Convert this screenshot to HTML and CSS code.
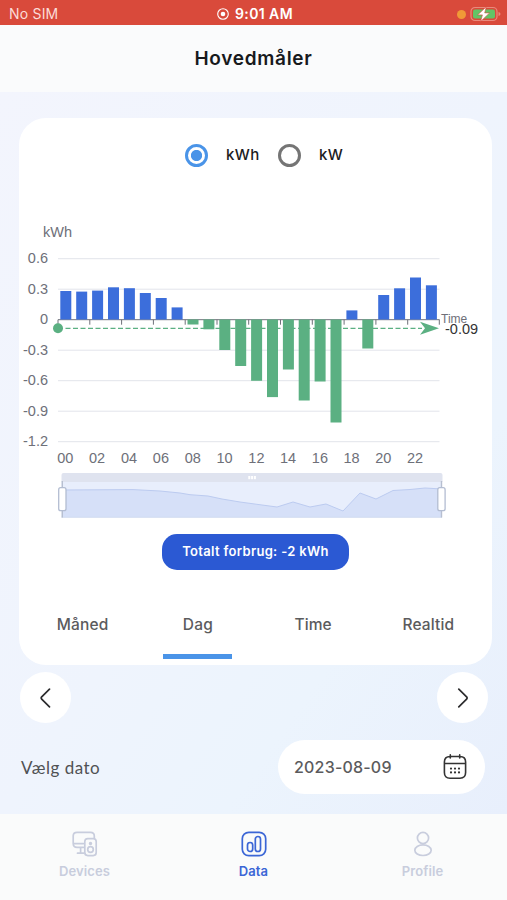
FILE: index.html
```html
<!DOCTYPE html>
<html lang="da">
<head>
    <meta charset="UTF-8">
    <meta name="viewport" content="width=device-width, initial-scale=1.0">
    <title>Hovedmåler</title>
    <link rel="stylesheet" href="styles.css">
</head>
<body>
    <div class="status">
        <span class="sim">No SIM</span>
        <div class="clock">
            <svg width="12" height="12" viewBox="0 0 12 12"><circle cx="6" cy="6" r="5.3" fill="none" stroke="#fff" stroke-width="1.1"/><circle cx="6" cy="6" r="2.3" fill="#fff"/></svg>
            <span>9:01 AM</span>
        </div>
        <div class="battery">
            <span class="dot"></span>
            <svg width="31" height="16" viewBox="0 0 31 16">
                <rect x="1" y="1.5" width="26" height="13" rx="4" fill="none" stroke="#e98a7d" stroke-width="1.2"/>
                <rect x="3" y="3.5" width="22" height="9" rx="2" fill="#62c466"/>
                <path d="M28.5 6v4q2-.6 2-2t-2-2z" fill="#e98a7d"/>
                <path d="M16.3.8 7.6 8.9h4.8L10.600 15.500l9-8.600h-4.900z" fill="#fff" stroke="#d9483a" stroke-width=".6"/>
            </svg>
        </div>
    </div>

    <header class="header">
        <h1>Hovedmåler</h1>
    </header>

    <main class="content">
        <section class="card">
            <div class="units">
                <span class="radio checked"></span>
                <label>kWh</label>
                <span class="radio"></span>
                <label>kW</label>
            </div>

            <svg class="chart" width="473" height="315" viewBox="19 210 473 315">
                <!-- grid -->
                <path d="M58 258.7h381.5M58 289.2h381.5M58 350.2h381.5M58 380.7h381.5M58 411.2h381.5M58 441.7h381.5" stroke="#e2e4eb"/>
                <!-- x axis -->
                <path d="M58 319.7h381.5M58 319.7v5M89.8 319.7v5M121.6 319.7v5M153.4 319.7v5M185.2 319.7v5M217 319.7v5M248.7 319.7v5M280.5 319.7v5M312.3 319.7v5M344.1 319.7v5M375.9 319.7v5M407.7 319.7v5M439.3 319.7v5" stroke="#6e7079" fill="none"/>
                <!-- usage -->
                <g fill="#3c6edb">
                    <rect x="60.3" y="291" width="11" height="28.5"/>
                    <rect x="76.2" y="291.6" width="11" height="27.9"/>
                    <rect x="92.1" y="290.6" width="11" height="28.9"/>
                    <rect x="108" y="287.3" width="11" height="32.2"/>
                    <rect x="123.9" y="288.2" width="11" height="31.3"/>
                    <rect x="139.8" y="293" width="11" height="26.5"/>
                    <rect x="155.7" y="298" width="11" height="21.5"/>
                    <rect x="171.6" y="307.4" width="11" height="12.1"/>
                    <rect x="346.4" y="310.4" width="11" height="9.1"/>
                    <rect x="378.2" y="295" width="11" height="24.5"/>
                    <rect x="394.1" y="288.3" width="11" height="31.2"/>
                    <rect x="410" y="277.5" width="11" height="42"/>
                    <rect x="425.9" y="285.3" width="11" height="34.2"/>
                </g>
                <!-- production -->
                <g fill="#5bb082">
                    <rect x="187.5" y="319.5" width="11" height="5"/>
                    <rect x="203.4" y="319.5" width="11" height="9.8"/>
                    <rect x="219.3" y="319.5" width="11" height="30.5"/>
                    <rect x="235.2" y="319.5" width="11" height="46.5"/>
                    <rect x="251.1" y="319.5" width="11" height="61.3"/>
                    <rect x="267" y="319.5" width="11" height="77.6"/>
                    <rect x="282.9" y="319.5" width="11" height="50"/>
                    <rect x="298.7" y="319.5" width="11" height="81"/>
                    <rect x="314.6" y="319.5" width="11" height="62"/>
                    <rect x="330.5" y="319.5" width="11" height="103"/>
                    <rect x="362.3" y="319.5" width="11" height="29"/>
                </g>
                <!-- average line -->
                <path d="M58 328.3h364" stroke="#5bb082" stroke-width="1.2" stroke-dasharray="5 2.5"/>
                <circle cx="58" cy="328.3" r="5" fill="#5bb082"/>
                <path d="M439 328.3 420 321.8l5 6.5-5 6.5z" fill="#5bb082"/>

                <g class="axis-text">
                    <text x="57.5" y="237" text-anchor="middle">kWh</text>
                    <g text-anchor="end">
                        <text x="48" y="263">0.6</text>
                        <text x="48" y="293.5">0.3</text>
                        <text x="48" y="324">0</text>
                        <text x="48" y="354.5">-0.3</text>
                        <text x="48" y="385">-0.6</text>
                        <text x="48" y="415.500">-0.9</text>
                        <text x="48" y="446">-1.2</text>
                    </g>
                    <g text-anchor="middle">
                        <text x="65.3" y="463.2">00</text>
                        <text x="97.1" y="463.2">02</text>
                        <text x="129" y="463.2">04</text>
                        <text x="160.9" y="463.2">06</text>
                        <text x="192.7" y="463.2">08</text>
                        <text x="224.6" y="463.2">10</text>
                        <text x="256.4" y="463.2">12</text>
                        <text x="288" y="463.2">14</text>
                        <text x="319.9" y="463.2">16</text>
                        <text x="351.6" y="463.2">18</text>
                        <text x="383.2" y="463.2">20</text>
                        <text x="415" y="463.2">22</text>
                    </g>
                    <text class="axis-name" x="441" y="322.6">Time</text>
                    <text class="average" x="445" y="333.6">-0.09</text>
                </g>

                <!-- zoom slider -->
                <rect x="61.5" y="482" width="380.5" height="35.5" fill="#e8eefc"/>
                <path d="M62 490 133 489.6 160 491 180 493 190 494.7 208 496 222 499 240 502 262 505 277 507 293 502 310 507 326 504 343 511 360 493 376 499 393 490.5 410 489.5 425 488 442 489V517.5H62z" fill="#d6e0f8"/>
                <path d="M62 490 133 489.6 160 491 180 493 190 494.7 208 496 222 499 240 502 262 505 277 507 293 502 310 507 326 504 343 511 360 493 376 499 393 490.5 410 489.5 425 488 442 489" fill="none" stroke="#bccbf0"/>
                <path d="M61.5 517.3H442" stroke="#d2dbee" stroke-width=".7"/>
                <path d="M61.5 482v-7q0-2 2-2H440.5q2 0 2 2v7z" fill="#dfe3ef"/>
                <g fill="#fff">
                    <rect x="248.3" y="476" width="2" height="3.2"/>
                    <rect x="251.1" y="476" width="2" height="3.2"/>
                    <rect x="253.9" y="476" width="2" height="3.2"/>
                </g>
                <path d="M62.3 481v36.5M441.5 481v36.5" stroke="#b7bfd0" stroke-width="1.4"/>
                <g fill="#fff" stroke="#b3bdd2" stroke-width="1.3">
                    <rect x="58.7" y="487.7" width="7.3" height="23" rx="2"/>
                    <rect x="437.8" y="487.7" width="7.3" height="23" rx="2"/>
                </g>
            </svg>

            <div class="total">Totalt forbrug: -2 kWh</div>

            <nav class="tabs">
                <span class="tab">Måned</span>
                <span class="tab active">Dag</span>
                <span class="tab">Time</span>
                <span class="tab">Realtid</span>
            </nav>
        </section>

        <div class="pager">
            <button class="round">
                <svg width="12" height="20" viewBox="0 0 12 20"><path d="M9.500 1.200 1.700 8.800q-1 1.200 0 2.400l7.800 7.600"/></svg>
            </button>
            <button class="round">
                <svg width="12" height="20" viewBox="0 0 12 20"><path d="m1.800 1.200 7.800 7.600q1 1.200 0 2.400l-7.800 7.600"/></svg>
            </button>
        </div>

        <div class="date-row">
            <span class="date-label">Vælg dato</span>
            <div class="date">
                <span>2023-08-09</span>
                <svg width="24" height="26" viewBox="0 0 24 26" fill="none" stroke="#333" stroke-width="1.6" stroke-linecap="round">
                    <path d="M7 2.5h10q5.600 0 5.600 5.500v10.500q0 5.700-5.600 5.700H7q-5.600 0-5.600-5.700V8q0-5.500 5.600-5.500zM1.400 9.500h21.200M7.300.9v3M16.700.9v3"/>
                    <path d="M8 14.600h.01M12 14.600h.01M16 14.600h.01M8 18.400h.01M12 18.400h.01M16 18.400h.01" stroke-width="2.200"/>
                </svg>
            </div>
        </div>
    </main>

    <footer class="bottom-nav">
        <a class="nav-item">
            <svg width="26" height="26" viewBox="0 0 26 26">
                <path d="M11.500 16.300H5q-3.800 0-3.800-3.700V5q0-3.700 3.800-3.700h13.500q3.800 0 3.800 3.700v2.200M1.200 12.600h10.300M8.600 16.300v5.500M5.500 22.200h6.200"/>
                <rect x="12.8" y="7.6" width="11.4" height="17" rx="3"/>
                <circle cx="18.500" cy="18.500" r="2.800"/>
                <circle cx="18.500" cy="12.500" r=".9"/>
            </svg>
            <span>Devices</span>
        </a>
        <a class="nav-item current">
            <svg width="26" height="26" viewBox="0 0 26 26">
                <rect x="1.3" y="1.3" width="23.4" height="23.4" rx="6.5"/>
                <rect x="6.500" y="11.500" width="5.200" height="9" rx="2.600"/>
                <rect x="14.300" y="5.500" width="5.200" height="15" rx="2.600"/>
            </svg>
            <span>Data</span>
        </a>
        <a class="nav-item">
            <svg width="26" height="26" viewBox="0 0 26 26">
                <circle cx="13" cy="7" r="5.6"/>
                <ellipse cx="13" cy="19.200" rx="8.200" ry="5.300"/>
            </svg>
            <span>Profile</span>
        </a>
    </footer>
</body>
</html>
```
FILE: styles.css
```css
* {
    box-sizing: border-box;
}

body {
    margin: 0;
    height: 900px;
    display: flex;
    flex-direction: column;
    font-family: Inter, "Liberation Sans", sans-serif;
    background: #fafbfc;
    overflow: hidden;
}

.status {
    height: 25px;
    padding: 3px 6px 0 9px;
    display: grid;
    grid-template-columns: 1fr auto 1fr;
    align-items: center;
    background: #d94a3b;
    color: #fff;
    font-size: 14px;
    line-height: 20px;
}

.sim {
    color: #fbdcd8;
    letter-spacing: 0.2px;
}

.clock {
    display: flex;
    align-items: center;
    gap: 6px;
    font-weight: 600;
    letter-spacing: 0.4px;
}

.battery {
    display: flex;
    align-items: center;
    justify-content: flex-end;
    gap: 4px;
}

.dot {
    width: 9px;
    height: 9px;
    border-radius: 50%;
    background: #f09a37;
}

.header {
    height: 67px;
    display: flex;
    align-items: center;
    justify-content: center;
}

.header h1 {
    margin: 0;
    font-size: 19px;
    font-weight: 600;
    letter-spacing: 0.7px;
    color: #17191c;
}

.content {
    height: 722px;
    padding: 26px 15px 0 19px;
    background: linear-gradient(125deg, #f3f5fd 0%, #eff4fd 50%, #ecf4fd 72%, #e8effc 100%);
}

.card {
    width: 473px;
    height: 547px;
    display: flex;
    flex-direction: column;
    align-items: center;
    background: #fff;
    border-radius: 27px;
}

.units {
    width: 100%;
    height: 92px;
    padding: 26px 0 0 166px;
    display: flex;
    align-items: flex-start;
    color: #1c1c1e;
    font-size: 15px;
    font-weight: 500;
    line-height: 22px;
}

.units label {
    width: 52px;
    margin-left: 18px;
    letter-spacing: 0.4px;
}

.radio {
    width: 23px;
    height: 23px;
    flex: none;
    border: 3px solid #757575;
    border-radius: 50%;
}

.radio.checked {
    border-color: #4a94e8;
    background: radial-gradient(circle, #4a94e8 5.2px, #fff 6px);
}

.chart {
    display: block;
    flex: none;
}

.axis-text {
    font-family: "Liberation Sans", Arial, sans-serif;
    font-size: 14.5px;
    fill: #6e7079;
}

.axis-text .axis-name {
    font-size: 12px;
}

.axis-text .average {
    font-size: 14.5px;
    fill: #333;
}

.total {
    width: 187px;
    height: 36px;
    margin-top: 9px;
    border-radius: 15px;
    background: #2b59d3;
    color: #fff;
    font-size: 13px;
    font-weight: 600;
    line-height: 35px;
    letter-spacing: 0.32px;
    text-align: center;
}

.tabs {
    width: 100%;
    height: 67px;
    margin-top: 22px;
    padding: 0 6px;
    display: grid;
    grid-template-columns: repeat(4, 1fr);
    justify-items: center;
}

.tab {
    width: 69px;
    padding-top: 22px;
    border-bottom: 5px solid transparent;
    color: #5b5b5d;
    font-size: 15.5px;
    font-weight: 500;
    line-height: 22px;
    letter-spacing: 0.15px;
    text-align: center;
}

.tab.active {
    border-color: #4a94e8;
}

.pager {
    margin-top: 7px;
    padding: 0 4px 0 1px;
    display: flex;
    justify-content: space-between;
}

.round {
    width: 51px;
    height: 51px;
    padding: 0;
    display: flex;
    align-items: center;
    justify-content: center;
    border: none;
    border-radius: 50%;
    background: #fff;
}

.round path {
    fill: none;
    stroke: #2b2b2d;
    stroke-width: 1.7;
    stroke-linecap: round;
}

.date-row {
    margin-top: 17px;
    padding: 0 7px 0 2px;
    display: flex;
    align-items: center;
    justify-content: space-between;
}

.date-label {
    font-family: Lato, sans-serif;
    font-size: 17px;
    color: #505154;
    letter-spacing: 0.5px;
}

.date {
    width: 207px;
    height: 54px;
    padding: 0 18px 0 16px;
    display: flex;
    align-items: center;
    justify-content: space-between;
    border-radius: 27px;
    background: #fff;
    color: #5b5b5d;
    font-size: 16px;
    font-weight: 500;
    letter-spacing: 0.2px;
}

.bottom-nav {
    height: 86px;
    padding-top: 17px;
    display: grid;
    grid-template-columns: 169px 169px 169px;
    background: #fafbfb;
}

.nav-item {
    display: flex;
    flex-direction: column;
    align-items: center;
    gap: 5px;
    color: #c8cddd;
    font-size: 13px;
    font-weight: 600;
    line-height: 18px;
    letter-spacing: 0.1px;
}

.nav-item svg {
    fill: none;
    stroke: currentColor;
    stroke-width: 1.7;
    stroke-linecap: round;
}

.nav-item.current {
    color: #3b66d6;
}
```
